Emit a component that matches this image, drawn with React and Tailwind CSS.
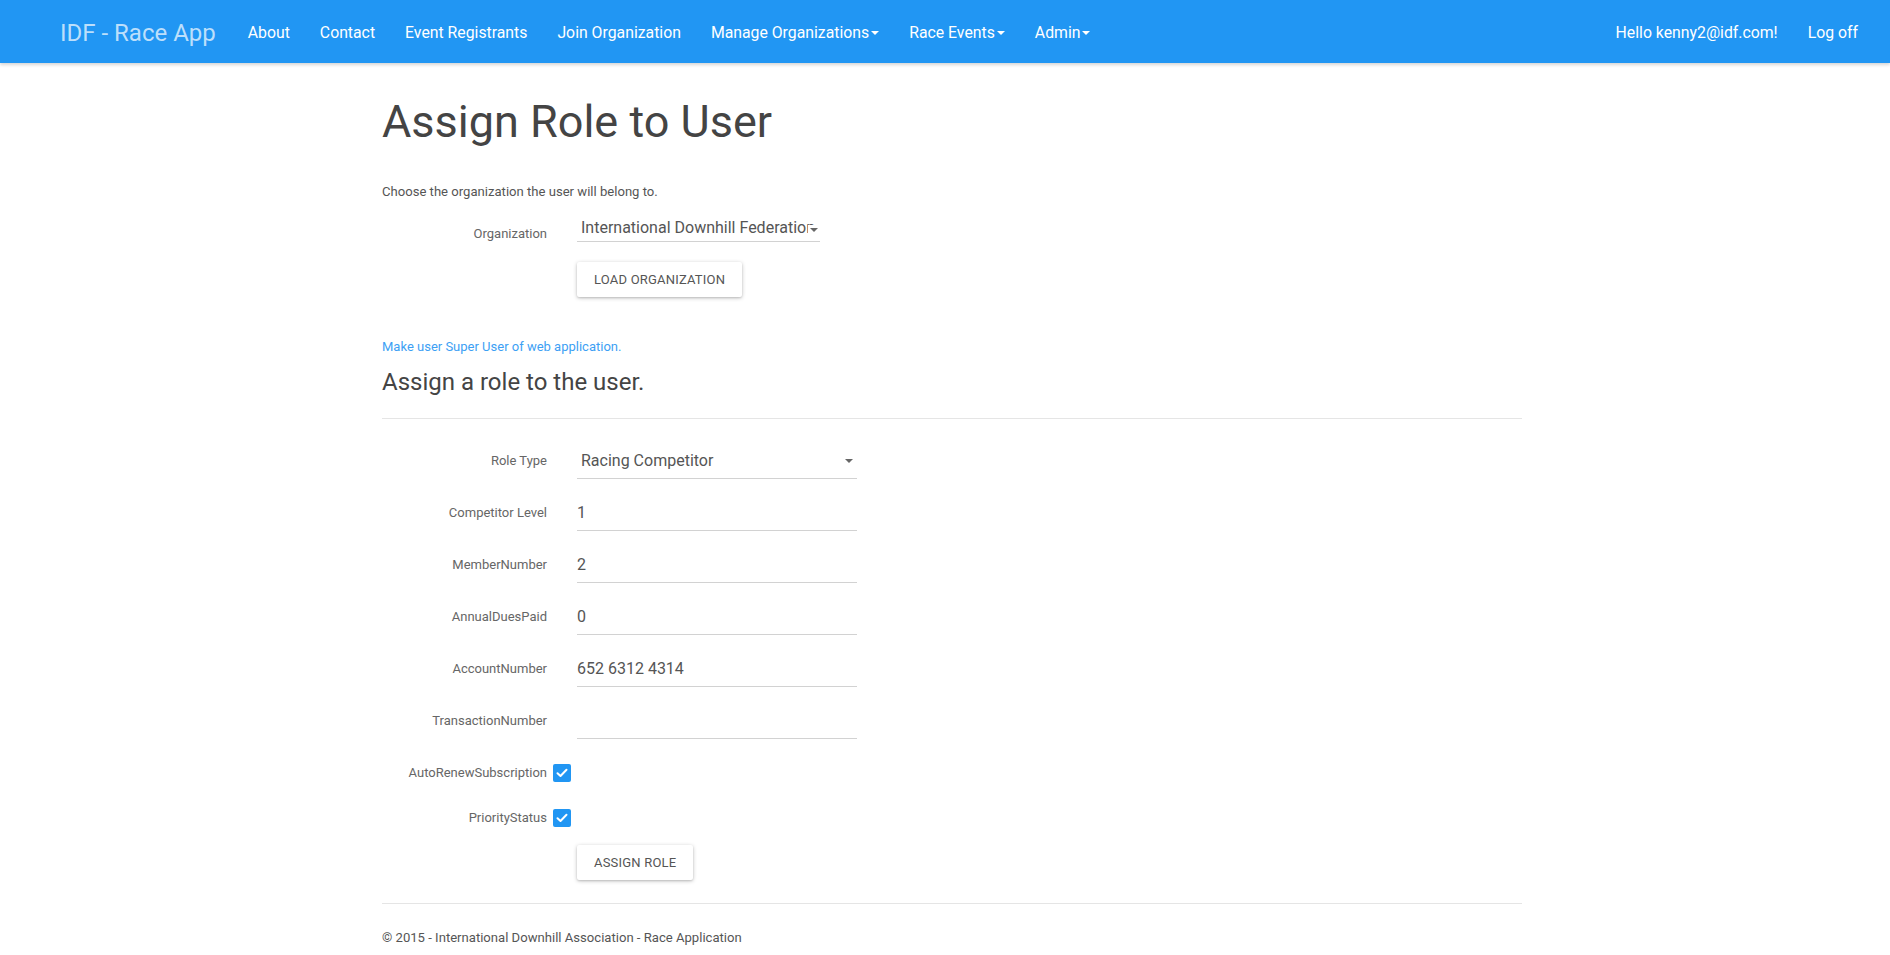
const navLinks = [
  { label: "About" },
  { label: "Contact" },
  { label: "Event Registrants" },
  { label: "Join Organization" },
  { label: "Manage Organizations", caret: true },
  { label: "Race Events", caret: true },
  { label: "Admin", caret: true },
];

const fields = [
  { label: "Competitor Level", value: "1" },
  { label: "MemberNumber", value: "2" },
  { label: "AnnualDuesPaid", value: "0" },
  { label: "AccountNumber", value: "652 6312 4314" },
  { label: "TransactionNumber", value: "" },
];

function Caret({ color = "border-t-white" }) {
  return (
    <span
      className={`inline-block w-0 h-0 ml-[2px] border-t-[4px] border-x-[4px] border-x-transparent align-middle ${color}`}
    />
  );
}

function Navbar() {
  return (
    <nav className="h-[63px] bg-[#2196f3] flex items-center pt-[3px] pl-[45px] pr-[17px] shadow-[0_2px_3px_rgba(0,0,0,0.16)] relative z-10">
      <a className="pl-[15px] pr-[17px] text-[24px] text-[#bcdffb] leading-[30px]">IDF - Race App</a>
      <ul className="flex items-center">
        {navLinks.map((l) => (
          <li key={l.label} className="px-[15px] text-[15.8px] text-white leading-[20px] flex items-center">
            {l.label}
            {l.caret && <Caret />}
          </li>
        ))}
      </ul>
      <ul className="ml-auto flex items-center">
        <li className="px-[15px] text-[15.8px] text-white">Hello kenny2@idf.com!</li>
        <li className="px-[15px] text-[15.8px] text-white">Log off</li>
      </ul>
    </nav>
  );
}

function Label({ children }) {
  return (
    <label className="block w-[180px] shrink-0 pr-[15px] text-right text-[13px] leading-[20px] text-[#666]">
      {children}
    </label>
  );
}

function Button({ children, className = "" }) {
  return (
    <button
      className={`h-[35px] px-[17px] rounded-[2px] bg-white text-[13px] uppercase text-[#555] tracking-[0.2px] shadow-[0_1px_4px_rgba(0,0,0,0.22),0_1px_2px_rgba(0,0,0,0.12)] ${className}`}
    >
      {children}
    </button>
  );
}

function Check() {
  return (
    <span className="w-[18px] h-[18px] rounded-[2px] bg-[#2196f3] flex items-center justify-center ml-[6px]">
      <svg width="12" height="10" viewBox="0 0 12 10" fill="none">
        <path d="M1.5 5.2 L4.5 8 L10.5 1.8" stroke="white" strokeWidth="2" strokeLinecap="round" strokeLinejoin="round" />
      </svg>
    </span>
  );
}

export default function App() {
  return (
    <div className="min-h-screen bg-white font-['Roboto','Liberation_Sans',sans-serif] text-[#444]">
      <Navbar />

      <div className="ml-[382px] w-[1140px]">
        <h1 className="mt-[33px] text-[45px] leading-[52px] text-[#444]">Assign Role to User</h1>

        <p className="mt-[34px] text-[13.1px] leading-[20px] text-[#555]">
          Choose the organization the user will belong to.
        </p>

        <div className="mt-[4px] flex items-start h-[36px]">
          <div className="mt-[18px]">
            <Label>Organization</Label>
          </div>
          <div className="ml-[15px] w-[243px] h-[36px] pt-[12px] border-b border-[#d2d2d2] relative overflow-hidden">
            <div className="pl-[4px] text-[16px] leading-[20px] text-[#555] whitespace-nowrap">
              International Downhill Federation
            </div>
            <span className="absolute right-[2px] top-[19px] w-[10px] h-[10px] bg-white flex items-center justify-center">
              <Caret color="border-t-[#666]" />
            </span>
          </div>
        </div>

        <div className="mt-[20px] ml-[195px]">
          <Button>Load Organization</Button>
        </div>

        <a className="block mt-[40px] text-[13px] leading-[20px] text-[#3d9ff4]">
          Make user Super User of web application.
        </a>

        <h3 className="mt-[11px] text-[24px] leading-[28px] text-[#444]">Assign a role to the user.</h3>

        <hr className="mt-[22px] border-t border-[#e5e5e5]" />

        <div className="mt-[24px] flex flex-col gap-[16px]">
          <div className="flex items-center h-[36px]">
            <Label>Role Type</Label>
            <div className="ml-[15px] w-[280px] h-[36px] border-b border-[#d2d2d2] flex items-center justify-between pl-[4px] pr-[4px]">
              <span className="text-[16px] text-[#555]">Racing Competitor</span>
              <Caret color="border-t-[#666]" />
            </div>
          </div>
          {fields.map((f) => (
            <div key={f.label} className="flex items-center h-[36px]">
              <Label>{f.label}</Label>
              <div className="ml-[15px] w-[280px] h-[36px] border-b border-[#d2d2d2] flex items-center">
                <span className="text-[16px] text-[#555]">{f.value}</span>
              </div>
            </div>
          ))}
        </div>

        <div className="mt-[24px] flex flex-col gap-[25px]">
          <div className="flex items-center h-[20px]">
            <Label>AutoRenewSubscription</Label>
            <div className="-ml-[15px]">
              <Check />
            </div>
          </div>
          <div className="flex items-center h-[20px]">
            <Label>PriorityStatus</Label>
            <div className="-ml-[15px]">
              <Check />
            </div>
          </div>
        </div>

        <div className="mt-[17px] ml-[195px]">
          <Button>Assign Role</Button>
        </div>

        <hr className="mt-[23px] border-t border-[#e5e5e5]" />

        <footer className="mt-[24px] pb-[7px] text-[13.1px] leading-[20px] text-[#555]">
          © 2015 - International Downhill Association - Race Application
        </footer>
      </div>
    </div>
  );
}
